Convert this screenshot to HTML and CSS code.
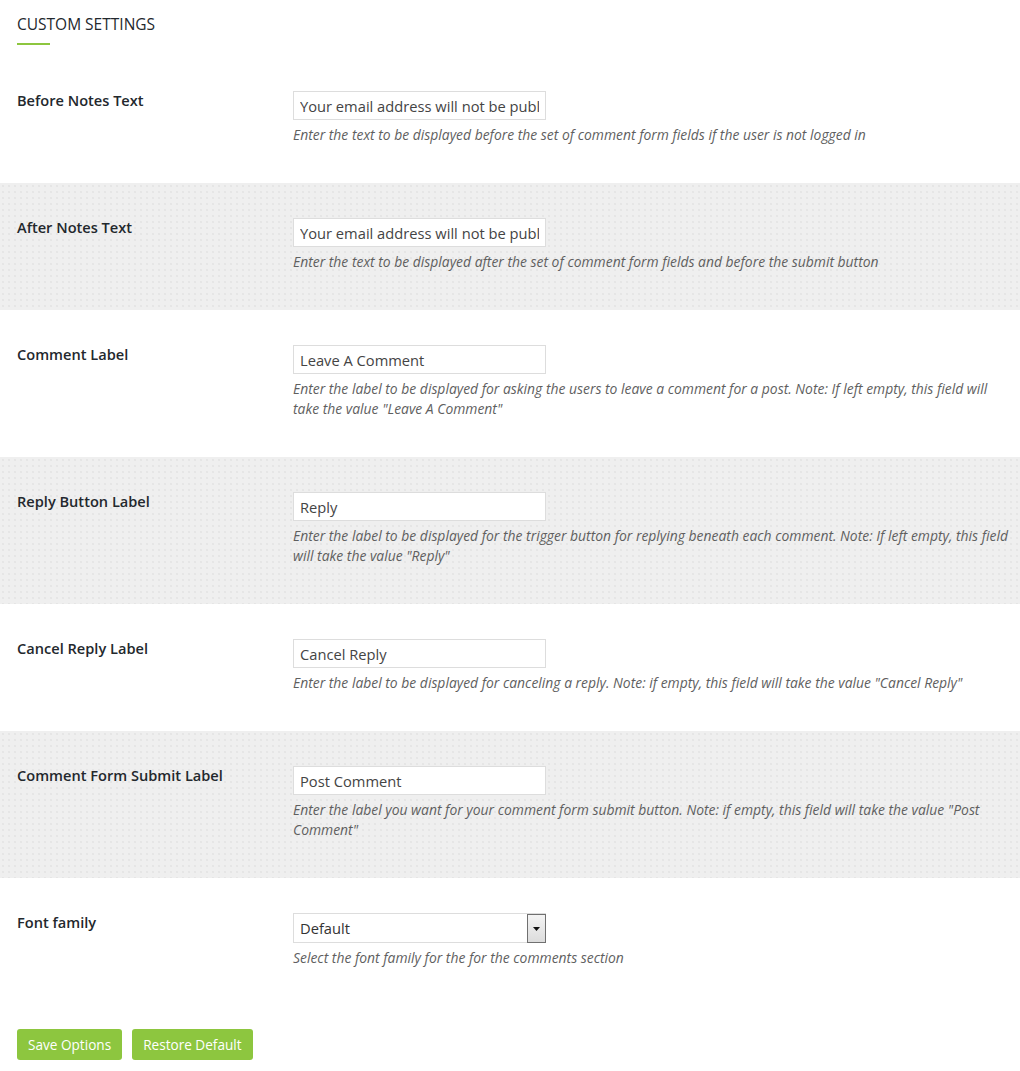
FILE: index.html
```
<!DOCTYPE html>
<html lang="en">
<head>
<meta charset="UTF-8">
<meta name="viewport" content="width=device-width, initial-scale=1.0">
<title>Custom Settings</title>
<link rel="stylesheet" href="styles.css">
</head>
<body>

<div class="settings-wrap">
    <div class="settings-head">
        <h2 class="settings-title">CUSTOM SETTINGS</h2>
    </div>

    <!-- Option rows -->
    <div class="option-row">
        <label class="option-label" for="beforeNotes">Before Notes Text</label>
        <div class="option-field">
            <input type="text" id="beforeNotes" class="text-input" value="Your email address will not be published.">
            <p class="help">Enter the text to be displayed before the set of comment form fields if the user is not logged in</p>
        </div>
    </div>

    <div class="option-row alt">
        <label class="option-label" for="afterNotes">After Notes Text</label>
        <div class="option-field">
            <input type="text" id="afterNotes" class="text-input" value="Your email address will not be published.">
            <p class="help">Enter the text to be displayed after the set of comment form fields and before the submit button</p>
        </div>
    </div>

    <div class="option-row">
        <label class="option-label" for="commentLabel">Comment Label</label>
        <div class="option-field">
            <input type="text" id="commentLabel" class="text-input" value="Leave A Comment">
            <p class="help">Enter the label to be displayed for asking the users to leave a comment for a post. Note: If left empty, this field will take the value "Leave A Comment"</p>
        </div>
    </div>

    <div class="option-row alt">
        <label class="option-label" for="replyLabel">Reply Button Label</label>
        <div class="option-field">
            <input type="text" id="replyLabel" class="text-input" value="Reply">
            <p class="help">Enter the label to be displayed for the trigger button for replying beneath each comment. Note: If left empty, this field will take the value "Reply"</p>
        </div>
    </div>

    <div class="option-row">
        <label class="option-label" for="cancelLabel">Cancel Reply Label</label>
        <div class="option-field">
            <input type="text" id="cancelLabel" class="text-input" value="Cancel Reply">
            <p class="help">Enter the label to be displayed for canceling a reply. Note: if empty, this field will take the value "Cancel Reply"</p>
        </div>
    </div>

    <div class="option-row alt">
        <label class="option-label" for="submitLabel">Comment Form Submit Label</label>
        <div class="option-field">
            <input type="text" id="submitLabel" class="text-input" value="Post Comment">
            <p class="help">Enter the label you want for your comment form submit button. Note: if empty, this field will take the value "Post Comment"</p>
        </div>
    </div>

    <div class="option-row">
        <label class="option-label" for="fontFamily">Font family</label>
        <div class="option-field">
            <div class="select-box">
                <select id="fontFamily" class="select-input">
                    <option>Default</option>
                    <option>Arial</option>
                    <option>Georgia</option>
                </select>
                <span class="select-arrow"><svg width="7" height="4" viewBox="0 0 7 4"><path d="M0 0h7L3.5 4z" fill="#111"/></svg></span>
            </div>
            <p class="help">Select the font family for the for the comments section</p>
        </div>
    </div>

    <!-- Buttons -->
    <div class="actions">
        <button class="btn">Save Options</button>
        <button class="btn">Restore Default</button>
    </div>
</div>

</body>
</html>
```

FILE: styles.css
```
/* Base */
body {
    margin: 0;
    padding: 0;
    background-color: #fff;
    font-family: "Open Sans", "Noto Sans", sans-serif;
    color: #23282d;
}

/* Heading */
.settings-head {
    height: 56px;
    padding: 14px 17px 0;
    box-sizing: border-box;
}

.settings-title {
    margin: 0;
    font-size: 15.5px;
    font-weight: 400;
    line-height: 20px;
    color: #23282d;
}

.settings-title::after {
    content: "";
    display: block;
    width: 33px;
    height: 2px;
    margin-top: 9px;
    background-color: #8dc63f;
}

/* Rows */
.option-row {
    display: grid;
    grid-template-columns: 276px 1fr;
    padding: 35px 4px 38px 17px;
}

.option-row:first-of-type {
    padding-top: 36px;
    padding-bottom: 37px;
}

.option-row.alt {
    background-color: #efefef;
    background-image: radial-gradient(circle, #e2e2e2 0.6px, transparent 1px);
    background-size: 6px 6px;
}

.option-label {
    font-size: 14.6px;
    font-weight: 600;
    line-height: 18px;
    color: #23282d;
}

.text-input {
    display: block;
    width: 253px;
    height: 29px;
    box-sizing: border-box;
    margin: 0;
    padding: 0 6px;
    border: 1px solid #ddd;
    background: #fff;
    font-family: inherit;
    font-size: 14.7px;
    color: #444;
    outline: none;
}

.help {
    margin: 5px 0 0;
    font-size: 13.9px;
    line-height: 20px;
    font-style: italic;
    color: #5f5f5f;
}

/* Select */
.select-box {
    display: flex;
    width: 253px;
    height: 30px;
    box-sizing: border-box;
    border: 1px solid #ddd;
    background: #fff;
}

.select-input {
    flex: 1;
    appearance: none;
    -webkit-appearance: none;
    border: none;
    background: transparent;
    padding: 0 6px;
    font-family: inherit;
    font-size: 14.7px;
    color: #333;
    outline: none;
}

.select-arrow {
    display: flex;
    align-items: center;
    justify-content: center;
    width: 17px;
    margin: 0 -1px -1px 0;
    border: 1px solid #707070;
    background: linear-gradient(#f4f4f4, #dcdcdc);
}

/* Buttons */
.actions {
    display: flex;
    gap: 10px;
    padding: 23px 17px 11px;
}

.btn {
    height: 31px;
    padding: 0 11px;
    border: none;
    border-radius: 3px;
    background-color: #8dc63f;
    color: #fff;
    font-family: inherit;
    font-size: 13.6px;
    cursor: pointer;
}

.btn:hover {
    background-color: #7bb32e;
}
```
